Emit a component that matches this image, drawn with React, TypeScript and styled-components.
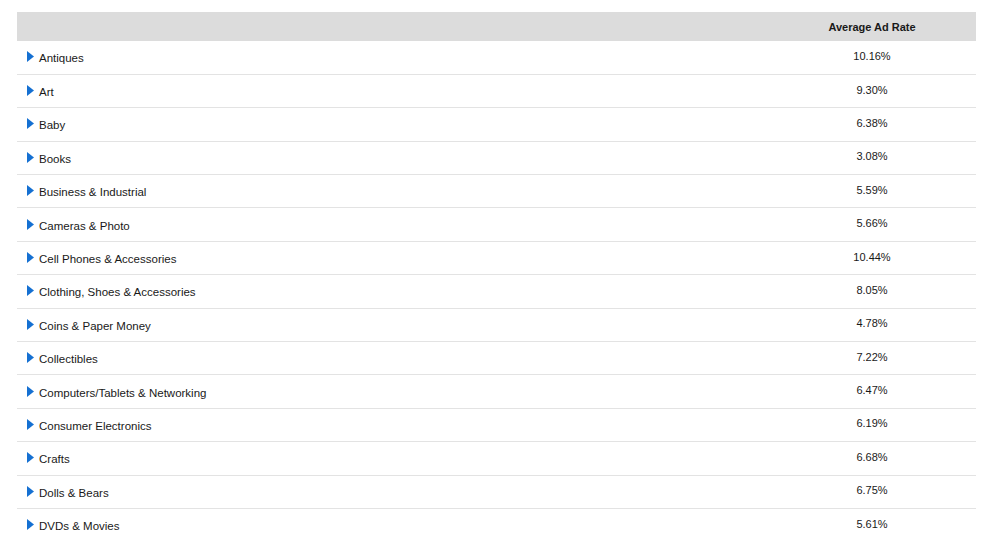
import styled, { createGlobalStyle } from 'styled-components'

const rates: [string, string][] = [
  ['Antiques', '10.16%'],
  ['Art', '9.30%'],
  ['Baby', '6.38%'],
  ['Books', '3.08%'],
  ['Business & Industrial', '5.59%'],
  ['Cameras & Photo', '5.66%'],
  ['Cell Phones & Accessories', '10.44%'],
  ['Clothing, Shoes & Accessories', '8.05%'],
  ['Coins & Paper Money', '4.78%'],
  ['Collectibles', '7.22%'],
  ['Computers/Tablets & Networking', '6.47%'],
  ['Consumer Electronics', '6.19%'],
  ['Crafts', '6.68%'],
  ['Dolls & Bears', '6.75%'],
  ['DVDs & Movies', '5.61%'],
]

export default function App() {
  return (
    <Page>
      <GlobalStyle />
      <Table>
        <thead>
          <tr>
            <HeadCell />
            <HeadCell $value>Average Ad Rate</HeadCell>
          </tr>
        </thead>
        <tbody>
          {rates.map(([name, rate]) => (
            <Row key={name}>
              <LabelCell>
                <Toggle>
                  <Caret viewBox="0 0 7 11">
                    <path d="M0 0 L7 5.5 L0 11 Z" />
                  </Caret>
                  {name}
                </Toggle>
              </LabelCell>
              <ValueCell>{rate}</ValueCell>
            </Row>
          ))}
        </tbody>
      </Table>
    </Page>
  )
}

const GlobalStyle = createGlobalStyle`
body {
  margin: 0;
  background: #fff;
  font-family: "Liberation Sans", Arial, sans-serif;
  color: #191919;
}
`

const Page = styled.div`
padding: 12px 15px 0 17px;
`

const Table = styled.table`
width: 100%;
border-collapse: collapse;
table-layout: fixed;
`

const HeadCell = styled.th<{ $value?: boolean }>`
background: #dcdcdc;
height: 29px;
padding: 0;
font-size: 11px;
font-weight: 700;
text-align: center;
vertical-align: middle;
width: ${p => (p.$value ? '208px' : 'auto')};
`

const Row = styled.tr`
height: 33.4px;
& + & td {
  border-top: 1px solid #e3e3e3;
}
`

const LabelCell = styled.td`
padding: 0 0 0 10px;
vertical-align: middle;
`

const Toggle = styled.span`
display: inline-flex;
align-items: center;
gap: 4px;
font-size: 11.5px;
line-height: 14px;
padding-top: 3px;
`

const Caret = styled.svg`
width: 7px;
height: 11px;
fill: #1570d2;
margin-top: -3px;
margin-right: 1px;
`

const ValueCell = styled.td`
padding: 0 0 3px;
font-size: 11px;
text-align: center;
vertical-align: middle;
`
